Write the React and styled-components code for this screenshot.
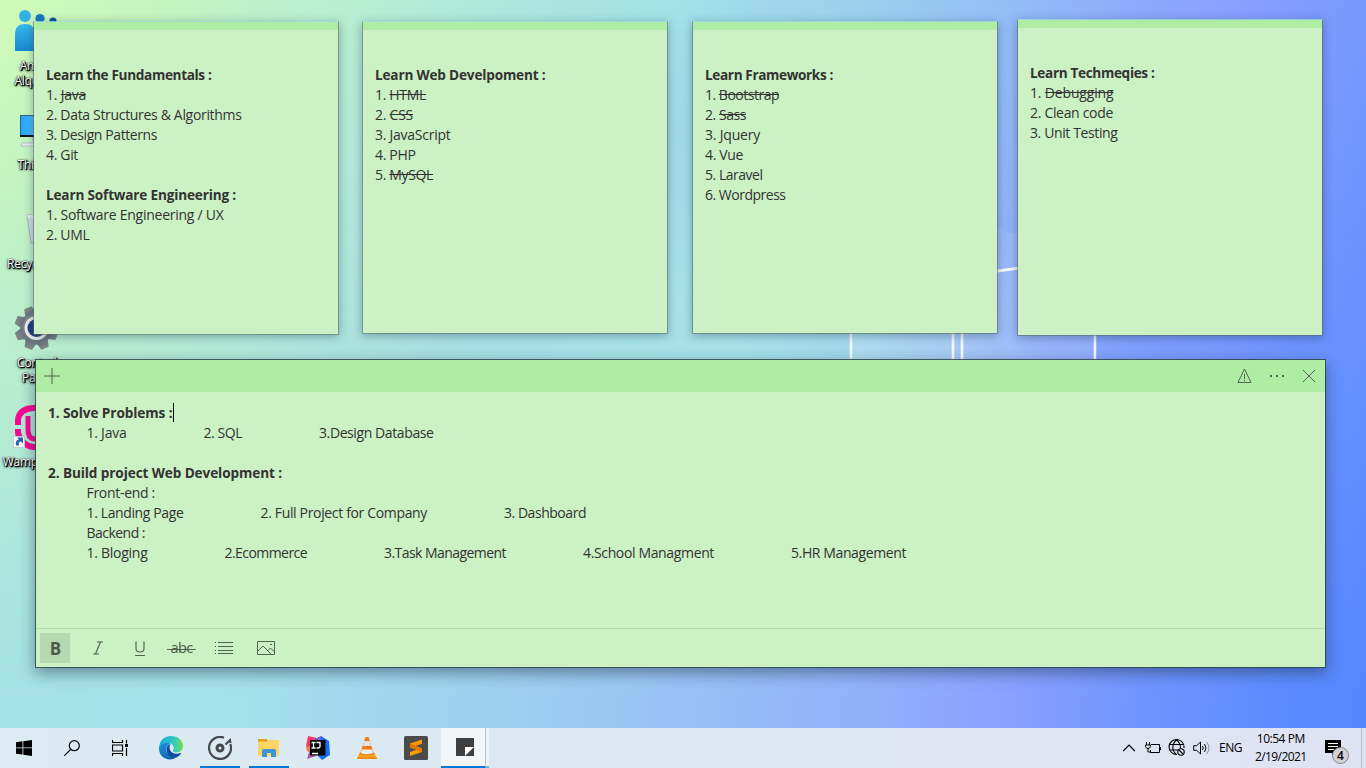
import React, { useLayoutEffect, useRef, useState } from "react";
import styled, { createGlobalStyle } from "styled-components";

const GlobalStyle = createGlobalStyle`
  * { box-sizing: border-box; }
  html, body { margin: 0; padding: 0; overflow: hidden; }
  body { font-family: "Open Sans", "Noto Sans", sans-serif; }
  svg { display: block; }
`;

const Desktop = styled.div`
  position: relative;
  display: flex;
  flex-direction: column;
  width: 1366px;
  height: 768px;
  overflow: hidden;
  background: linear-gradient(90deg, #d0fbb6 0, #c4f5c2 170px, #b4ecd6 400px, #a3e1e7 680px, #9bceee 880px, #92bbf7 1030px, #8da8fd 1150px, #889fff 1250px, #7799ff 1366px);
`;
const WallpaperLower = styled.div`
  position: absolute;
  inset: 0;
  background: linear-gradient(90deg, #a4e1e6 0, #a4e0ea 240px, #a0d5ee 400px, #9bc8f2 600px, #91b2fa 850px, #8ba1ff 1000px, #7195ff 1130px, #598aff 1300px, #5587ff 1366px);
  mask-image: linear-gradient(180deg, transparent 0, #000 700px);
`;
const WallpaperArt = styled.svg`
  position: absolute;
  inset: 0;
`;
const Workspace = styled.main`
  position: relative;
  flex: 1;
`;

const Shortcuts = styled.div`
  display: flex;
  flex-direction: column;
  width: 74px;
`;
const Shortcut = styled.div`
  display: flex;
  flex-direction: column;
  align-items: center;
  height: 99px;
  padding-top: 6px;
`;
const ShortcutLabel = styled.div`
  margin-top: 4px;
  font-size: 12px;
  line-height: 15px;
  letter-spacing: -0.25px;
  text-align: center;
  white-space: pre;
  color: #fff;
  text-shadow: 0 0 1px #000, 1px 1px 0 rgba(0, 0, 0, .85), 1px 1px 1px #000, 1px 1px 2px #000, 0 1px 3px #000;
`;

const Note = styled.section`
  position: absolute;
  display: flex;
  flex-direction: column;
  left: ${(p) => p.$x}px;
  top: ${(p) => p.$y}px;
  width: ${(p) => p.$w}px;
  height: ${(p) => p.$h}px;
  background: #cbf1c4;
  background-clip: padding-box;
  border: 1px solid ${(p) => (p.$active ? "rgba(45,70,75,.85)" : "rgba(100,105,110,.55)")};
  border-top-color: ${(p) => (p.$active ? "rgba(45,70,75,.85)" : "rgba(160,225,230,.75)")};
  box-shadow: ${(p) => (p.$active ? "0 5px 14px rgba(20,40,60,.48)" : "0 2px 9px rgba(20,50,70,.36)")};
  color: #333;
`;
const NoteStripe = styled.div`
  height: 8px;
  flex: none;
  background: #aeeda3;
`;
const NoteBody = styled.div`
  flex: 1;
  padding: ${(p) => (p.$active ? "11px 12px" : "35px 12px")};
`;
const NoteLine = styled.div`
  display: flex;
  gap: 76.5px;
  height: 20px;
  line-height: 20px;
  font-size: ${(p) => (p.$bold ? 13.6 : 14)}px;
  font-weight: ${(p) => (p.$bold ? 700 : 400)};
  padding-left: ${(p) => (p.$indent ? 38.5 : 0)}px;
  white-space: pre;
`;
const FitBox = styled.span`
  display: block;
  flex: none;
  width: ${(p) => p.$w}px;
`;
const Done = styled.span`
  text-decoration: line-through;
`;
const Caret = styled.i`
  width: 1px;
  height: 19px;
  margin-left: -76.5px;
  background: #000;
`;
const TitleBar = styled.header`
  display: flex;
  align-items: center;
  flex: none;
  height: 32px;
  background: #aeeda3;
  padding: 0 8px;
`;
const TitleActions = styled.div`
  display: flex;
  gap: 16px;
  margin-left: auto;
`;
const FormatBar = styled.footer`
  display: flex;
  gap: 12px;
  flex: none;
  height: 39px;
  padding: 4px;
  border-top: 1px solid #b8ddb4;
`;
const FormatButton = styled.div`
  display: flex;
  align-items: center;
  justify-content: center;
  width: 30px;
  height: 30px;
  padding-left: 1px;
  font-size: ${(p) => p.$size || 17}px;
  font-weight: ${(p) => (p.$on ? 700 : 400)};
  background: ${(p) => (p.$on ? "#b6d9b1" : "transparent")};
  color: #4b5b48;
`;
const StruckLetters = styled.span`
  flex: none;
  line-height: 18px;
  letter-spacing: -0.6px;
  white-space: pre;
  background: linear-gradient(#52634f, #52634f) center 10px / 100% 1px no-repeat;
`;

const Taskbar = styled.footer`
  position: relative;
  display: flex;
  height: 40px;
  background: linear-gradient(90deg, #dbebf1 0, #dce9f2 500px, #dfe5f3 900px, #dfe2f3 1366px);
`;
const TaskGroup = styled.div`
  display: flex;
  gap: ${(p) => p.$gap || 0}px;
  margin-right: ${(p) => p.$after || 0}px;
`;
const TaskButton = styled.div`
  display: flex;
  align-items: center;
  justify-content: center;
  width: 48px;
  height: 40px;
  background: linear-gradient(#0078d7, #0078d7) center bottom / ${(p) => (p.$running ? 40 : 0)}px 2px no-repeat;
`;
const ActiveTask = styled.div`
  display: flex;
  align-items: center;
  justify-content: center;
  width: 45px;
  margin-left: 1px;
  padding-left: 4px;
  background: #f2f6f9;
  border-right: 1px solid #b9c3ca;
  border-bottom: 2px solid #0078d7;
`;
const StackedEdge = styled.div`
  width: 3px;
  background: #edf3f7;
  border-bottom: 2px solid #79b5e6;
`;
const Tray = styled.div`
  display: flex;
  align-items: center;
  margin-left: auto;
  color: #000;
`;
const TrayIcon = styled.div`
  display: flex;
  justify-content: center;
  width: 24px;
`;
const Language = styled.div`
  width: 42px;
  padding-left: 6px;
  font-size: 12px;
  line-height: 16px;
  white-space: nowrap;
`;
const Clock = styled.div`
  display: flex;
  flex-direction: column;
  align-items: center;
  width: 52px;
  font-size: 12px;
  line-height: 18px;
  white-space: nowrap;
`;
const ActionCenter = styled.div`
  position: relative;
  width: 26px;
  height: 40px;
  margin-left: 16px;
  padding-top: 12px;
`;
const Badge = styled.div`
  position: absolute;
  left: 9px;
  top: 19px;
  display: flex;
  align-items: center;
  justify-content: center;
  width: 17px;
  height: 17px;
  border: 1px solid #858585;
  border-radius: 50%;
  background: #d3d3d3;
  font-size: 12px;
  line-height: 14px;
  font-weight: 600;
`;
const ShowDesktop = styled.div`
  width: 5px;
  height: 40px;
  margin-left: 12px;
  border-left: 1px solid #b5b9c6;
`;

/* Adjusts letter spacing until the run occupies the requested width. */
function Fit({ w, children }) {
  const ref = useRef(null);
  const [spacing, setSpacing] = useState(0);
  useLayoutEffect(() => {
    const el = ref.current;
    const natural = el.getBoundingClientRect().width;
    setSpacing((w - 0.5 - natural) / el.textContent.length);
  }, [w]);
  return (
    <FitBox $w={w}>
      <span ref={ref} style={{ letterSpacing: spacing }}>{children}</span>
    </FitBox>
  );
}

const notes = [
  { x: 33, y: 21, h: 314, lines: [
    { bold: true, t: "Learn the Fundamentals :", w: 166 },
    { n: "1. ", t: "Java", w: 40.5, done: true },
    { n: "2. ", t: "Data Structures & Algorithms", w: 196 },
    { n: "3. ", t: "Design Patterns", w: 111.5 },
    { n: "4. ", t: "Git", w: 32.5 },
    null,
    { bold: true, t: "Learn Software Engineering :", w: 190.5 },
    { n: "1. ", t: "Software Engineering / UX", w: 178 },
    { n: "2. ", t: "UML", w: 44 },
  ] },
  { x: 362, y: 21, h: 313, lines: [
    { bold: true, t: "Learn Web Develpoment :", w: 171 },
    { n: "1. ", t: "HTML", w: 51.5, done: true },
    { n: "2. ", t: "CSS", w: 38.5, done: true },
    { n: "3. ", t: "JavaScript", w: 76 },
    { n: "4. ", t: "PHP", w: 41 },
    { n: "5. ", t: "MySQL", w: 58.5, done: true },
  ] },
  { x: 692, y: 21, h: 313, lines: [
    { bold: true, t: "Learn Frameworks :", w: 128.5 },
    { n: "1. ", t: "Bootstrap", w: 74.5, done: true },
    { n: "2. ", t: "Sass", w: 41.5, done: true },
    { n: "3. ", t: "Jquery", w: 55.5 },
    { n: "4. ", t: "Vue", w: 38.5 },
    { n: "5. ", t: "Laravel", w: 58 },
    { n: "6. ", t: "Wordpress", w: 81 },
  ] },
  { x: 1017, y: 19, h: 317, lines: [
    { bold: true, t: "Learn Techmeqies :", w: 125 },
    { n: "1. ", t: "Debugging", w: 84, done: true },
    { n: "2. ", t: "Clean code", w: 83.5 },
    { n: "3. ", t: "Unit Testing", w: 88 },
  ] },
];

const plan = [
  { bold: true, caret: true, cells: [["1. Solve Problems :", 125]] },
  { indent: true, cells: [["1. Java", 40.5], ["2. SQL", 39], ["3.Design Database", 115]] },
  { cells: [] },
  { bold: true, cells: [["2. Build project Web Development :", 234.5]] },
  { indent: true, cells: [["Front-end :", 69]] },
  { indent: true, cells: [["1. Landing Page", 97.5], ["2. Full Project for Company", 167], ["3. Dashboard", 82.5]] },
  { indent: true, cells: [["Backend :", 59]] },
  { indent: true, cells: [["1. Bloging", 61.5], ["2.Ecommerce", 83], ["3.Task Management", 122.5], ["4.School Managment", 131.5], ["5.HR Management", 115.5]] },
];

const PeopleIcon = () => (
  <svg width="48" height="48" viewBox="0 0 48 48">
    <defs>
      <linearGradient id="person" x1="0" y1="0" x2="0" y2="1"><stop offset="0" stopColor="#35b9ea" /><stop offset="1" stopColor="#1688d2" /></linearGradient>
    </defs>
    <circle cx="27" cy="12.500" r="4.600" fill="#1878c4" /><circle cx="40" cy="15" r="3.600" fill="#0b559f" />
    <path d="M20 45V24a8 8 0 0 1 16 0v21z" fill="#1878c4" />
    <circle cx="12" cy="10" r="6" fill="#31b2e6" />
    <path d="M2 45V28c0-7 4-10 10-10s10 3 10 10v17z" fill="url(#person)" />
  </svg>
);
const ComputerIcon = () => (
  <svg width="48" height="48" viewBox="0 0 48 48">
    <defs><linearGradient id="screen"><stop offset="0" stopColor="#22a7fb" /><stop offset="1" stopColor="#91d3fc" /></linearGradient></defs>
    <rect x="7" y="10" width="36" height="22" fill="#345d8c" /><rect x="8" y="11" width="34" height="19" fill="url(#screen)" />
    <path d="M7 30h36v2H7z" fill="#10151b" /><path d="M19 32h10v4H19z" fill="#b8c2cd" /><path d="M9 38h32v3H8z" fill="#e7ecf5" stroke="#a5adbd" strokeWidth=".7" />
  </svg>
);
const BinIcon = () => (
  <svg width="48" height="48" viewBox="0 0 48 48">
    <path d="M14 11h26l-4 28H18z" fill="#cfdbe1" stroke="#a4b2b7" strokeWidth="1" />
    <path d="M14 11h26l-1 3H15z" fill="#e4eaec" /><path d="M21 25l5-4 4 4-4 9-5-3z" fill="#2587cc" />
  </svg>
);
const ControlIcon = () => (
  <svg width="48" height="48" viewBox="0 0 48 48">
    <defs><linearGradient id="cog" x1="0" y1="0" x2=".3" y2="1"><stop offset="0" stopColor="#8c8985" /><stop offset="1" stopColor="#667681" /></linearGradient></defs>
    <g transform="translate(23.5 25)" fill="url(#cog)">
      <circle r="16.500" />
      {[22, 67, 112, 157, 202, 247, 292, 337].map((a) => <path key={a} transform={`rotate(${a})`} d="M-6-14l2-8H4l2 8z" />)}
      <circle r="12" fill="#efefed" /><circle r="9" fill="#243d7b" />
    </g>
  </svg>
);
const WampIcon = () => (
  <svg width="48" height="48" viewBox="0 0 48 48">
    <g fill="none" stroke="#f80895" strokeWidth="6">
      <path d="M5 23V18Q6 7 20 6h11q10 1 11 12v7M5 27v4q3 12 15 14h11q11-2 11-13" />
      <path d="M15 14v13q0 10 7 10 5 0 5-7V16m0 13q0 8 7 7" strokeWidth="5" />
    </g>
    <path d="M.5 34.500h11v11H.5z" fill="#f5f7f9" stroke="#c6ccd1" /><path d="M3 43.500q-1-6 3-6l-2-2h6v6l-2-2q-3 0-2 4z" fill="#2963aa" />
  </svg>
);

const shortcuts = [
  [PeopleIcon, "Amjad\nAlqudah"], [ComputerIcon, "This PC"], [BinIcon, "Recycle Bin"],
  [ControlIcon, "Control\nPanel"], [WampIcon, "Wampserver"],
];

const Line = ({ d, size = 16, w = 1, children }) => (
  <svg width={size} height={size} viewBox={`0 0 ${size} ${size}`} fill="none" stroke="#52634f" strokeWidth={w}>
    {d && <path d={d} />}{children}
  </svg>
);

const EdgeIcon = () => (
  <svg width="24" height="24" viewBox="0 0 24 24">
    <defs>
      <linearGradient id="edgeTop"><stop offset="0" stopColor="#16a9df" /><stop offset=".6" stopColor="#32c7c7" /><stop offset="1" stopColor="#6ae052" /></linearGradient>
      <linearGradient id="edgeLow" x1="0" y1="0" x2="1" y2="1"><stop offset="0" stopColor="#1695de" /><stop offset="1" stopColor="#0d54a6" /></linearGradient>
    </defs>
    <path d="M0 13C0 5 5 0 12 0c7 0 12 4.700 12 10 0 4-3 6.400-6.500 6.400-3 0-4-1.200-3.400-2.200.8-1.200 1-2.500.2-4C12.800 5.500 4 5.500 0 13z" fill="url(#edgeTop)" />
    <path d="M0 12.500C2 6.500 9 6 12.500 8.500c-3-.8-5.500 1.500-5.400 4.700 0 6 5.900 10 11.400 7.800C10 26.500 0 22 0 12.500z" fill="url(#edgeLow)" />
    <path d="M7.400 13c0-2.500 1.700-4.400 4.100-4.700-3 5 1.500 12 10.700 8.400-.5 2.500-4.500 5-7.900 5.300-4-.5-6.900-4-6.900-9z" fill="#0d4f9e" />
  </svg>
);
const IdeaIcon = () => (
  <svg width="24" height="24" viewBox="0 0 24 24">
    <path d="M2 0l9 2-5 14-6-6z" fill="#fc3569" /><path d="M9 3l6-3 8 5 1 14-8 5-4-4z" fill="#166ff3" /><path d="M15 0l-6 4 5 7z" fill="#8160d5" />
    <path d="M0 11l9-2-3 9-5-3z" fill="#ff7a48" /><path d="M4 13l-3 10 9-3z" fill="#ad53b7" />
    <path d="M4 4h15.500v15.500H4z" fill="#080808" /><path d="M5.500 6.500h4M7.500 6.500v5.500M5.500 12h4M10.500 6.500h3.500v4q0 1.500-1.500 1.500h-2M6 17.500h6" stroke="#fff" strokeWidth="1.300" fill="none" />
  </svg>
);
const VlcIcon = () => (
  <svg width="20" height="24" viewBox="0 0 20 24">
    <path d="M3 16h14l3 7H0z" fill="#fba21d" /><path d="M0 21.500h20V23H0z" fill="#ee8a10" />
    <path d="M8.500 1h3L17 18q-7 3-14 0z" fill="#f07b17" /><path d="M7.300 5h5.400l1.500 5H5.800z" fill="#dfe3e5" /><path d="M4.800 13.500h10.400l1 3.500q-6 2.500-12.500 0z" fill="#eceeee" />
  </svg>
);

export default function App() {
  return (
    <>
      <GlobalStyle />
      <Desktop>
        <WallpaperLower />
        <WallpaperArt width="1366" height="768">
          <defs>
            <linearGradient id="glow" x1="0" y1="0" x2="0" y2="1"><stop offset="0" stopColor="#fff" stopOpacity=".08" /><stop offset="1" stopColor="#fff" stopOpacity=".12" /></linearGradient>
            <radialGradient id="bloom"><stop offset="0" stopColor="#adefe2" stopOpacity=".6" /><stop offset=".4" stopColor="#adefe2" stopOpacity=".5" /><stop offset="1" stopColor="#adefe2" stopOpacity="0" /></radialGradient>
          </defs>
          <ellipse cx="740" cy="360" rx="300" ry="230" fill="url(#bloom)" />
          <path d="M851 200Q950 210 1095 260V360H851z" fill="url(#glow)" />
          <path d="M990 272l30-4" stroke="#fafafa" strokeWidth="3" />
          <path d="M851 330v35M1095 330v35" stroke="#f7f9fc" strokeWidth="2.500" />
          <path d="M953 330v35M962 330v35" stroke="#f7f8f9" strokeWidth="2.700" />
        </WallpaperArt>
        <Workspace>
          <Shortcuts>
            {shortcuts.map(([Icon, label]) => (
              <Shortcut key={label}><Icon /><ShortcutLabel>{label}</ShortcutLabel></Shortcut>
            ))}
          </Shortcuts>
          {notes.map((note) => (
            <Note key={note.x} $x={note.x} $y={note.y} $w={306} $h={note.h}>
              <NoteStripe />
              <NoteBody>
                {note.lines.map((l, i) => (
                  <NoteLine key={i} $bold={l?.bold}>
                    {l && <Fit w={l.w}>{l.n}{l.done ? <Done>{l.t}</Done> : l.t}</Fit>}
                  </NoteLine>
                ))}
              </NoteBody>
            </Note>
          ))}
          <Note $active $x={35} $y={359} $w={1291} $h={309}>
            <TitleBar>
              <Line d="M8 0v16M0 8h16" />
              <TitleActions>
                <Line d="M7.500 1L1 14.500h13zM7.500 6v5M7.500 12v1.200" />
                <Line><g fill="#52634f" stroke="none"><rect x="1" y="7" width="2" height="2" /><rect x="7" y="7" width="2" height="2" /><rect x="13" y="7" width="2" height="2" /></g></Line>
                <Line d="M2 2l12 12M14 2L2 14" />
              </TitleActions>
            </TitleBar>
            <NoteBody $active>
              {plan.map((row, i) => (
                <NoteLine key={i} $bold={row.bold} $indent={row.indent}>
                  {row.cells.map(([t, w]) => <Fit key={t} w={w}>{t}</Fit>)}
                  {row.caret && <Caret />}
                </NoteLine>
              ))}
            </NoteBody>
            <FormatBar>
              <FormatButton $on>B</FormatButton>
              <FormatButton><Line d="M7 2h6M3 14h6M10.500 2l-5 12" w={1.2} /></FormatButton>
              <FormatButton><Line d="M4 1.500v7q0 3.500 4 3.500t4-3.500v-7M3 15.500h10" w={1.2} /></FormatButton>
              <FormatButton $size={14.5}><StruckLetters> abc </StruckLetters></FormatButton>
              <FormatButton>
                <Line size={20}><path d="M1 4.500h2M1 8.500h2M1 12.500h2M1 15.500h2" strokeDasharray="1 1" /><path d="M4 4.500h15M4 8.500h15M4 12.500h15M4 15.500h15" /></Line>
              </FormatButton>
              <FormatButton>
                <Line size={20}><path d="M1.500 3.500h17v13h-17zM2 13l5-5 8 8M12 12.500l2.500-2.500 4 4" /><path d="M14 6.500h2" /></Line>
              </FormatButton>
            </FormatBar>
          </Note>
        </Workspace>
        <Taskbar>
          <TaskGroup $after={3}>
            <TaskButton>
              <svg width="16" height="16" viewBox="0 0 16 16"><path d="M0 2.300L6.500 1.300v6.200H0zM7.300 1.200L16 0v7.500H7.300zM0 8.300h6.500v6.300L0 13.700zM7.300 8.300H16V16l-8.700-1.200z" /></svg>
            </TaskButton>
            <TaskButton>
              <svg width="16" height="16" viewBox="0 0 16 16" fill="none" stroke="#000" strokeWidth="1.200"><circle cx="10.300" cy="5.700" r="5" /><path d="M6.700 9.300L.3 15.700" /></svg>
            </TaskButton>
            <TaskButton>
              <svg width="16" height="16" viewBox="0 0 16 16" fill="none" stroke="#000"><path d="M.5 0v2.500h10V0M.5 5h10v6H.5zM.5 16v-2.500h10V16M14.500 0v3.500M14.500 8v8" strokeWidth="1.200" /><path d="M13 4h3v3h-3z" fill="#000" stroke="none" /></svg>
            </TaskButton>
          </TaskGroup>
          <TaskGroup $gap={1}>
            <TaskButton><EdgeIcon /></TaskButton>
            <TaskButton $running>
              <svg width="24" height="24" viewBox="0 0 24 24" fill="none" stroke="#45494c"><path d="M16 1.700A11 11 0 1 0 22.300 8" strokeWidth="2.200" /><path d="M17.500 8.500l4.500-4.500.5 3" strokeWidth="2" /><circle cx="12" cy="12" r="3" strokeWidth="3" /></svg>
            </TaskButton>
            <TaskButton $running>
              <svg width="22" height="20" viewBox="0 0 22 20"><path d="M0 1h9l1 3H0z" fill="#dfa01b" /><path d="M0 3.500h9L11 2h10v16H0z" fill="#ffd566" /><path d="M4 19v-6q0-2 2-2h10q2 0 2 2v6h-5v-4H9v4z" fill="#3e93d3" /></svg>
            </TaskButton>
            <TaskButton><IdeaIcon /></TaskButton>
            <TaskButton><VlcIcon /></TaskButton>
            <TaskButton>
              <svg width="24" height="24" viewBox="0 0 24 24"><rect width="24" height="24" rx="1.500" fill="#4b4b4b" /><path d="M6 7.500l12-4v4.200l-7 2.500 7 2V16L6 20v-4l7-2.500-7-2z" fill="#ff9800" /><path d="M6 7.500l12 4.700V16L6 11.500z" fill="#df7900" /></svg>
            </TaskButton>
          </TaskGroup>
          <ActiveTask>
            <svg width="18" height="18" viewBox="0 0 18 18"><path d="M0 0h18v9H9v9H0z" fill="#3e3e3e" /><path d="M9 9h9l-9 9z" fill="#fff" /><path d="M18 9v9H9z" fill="#3e3e3e" /></svg>
          </ActiveTask>
          <StackedEdge />
          <Tray>
            <TrayIcon><svg width="14" height="14" viewBox="0 0 14 14" fill="none" stroke="#000" strokeWidth="1.200"><path d="M1.200 10L7 4.200l5.800 5.800" /></svg></TrayIcon>
            <TrayIcon><svg width="17" height="14" viewBox="0 0 17 14" fill="none" stroke="#000"><path d="M6 3.500h8.500v8h-9V9M15.500 6v3M1.500 1v3M4.500 1v3M.5 4h5v1.500Q5 7.500 3 7.500T.5 5.500zM3 7.500V11h2.500" /></svg></TrayIcon>
            <TrayIcon>
              <svg width="18" height="18" viewBox="0 0 18 18" fill="none" stroke="#000" strokeWidth="1.100"><path d="M9 15.500A7.500 7.500 0 1 1 16 9M2 5.500h14M1.500 11H10M8.500 1Q4 5 5 10.500q.5 3 3.500 5M8.500 1q4 3 4 8" /><circle cx="13" cy="13" r="3.200" /><path d="M11 11l4 4" /></svg>
            </TrayIcon>
            <TrayIcon>
              <svg width="17" height="14" viewBox="0 0 17 14" fill="none" stroke="#000"><path d="M.7 4.700h3L7.500 1v12L3.700 9.300h-3z" /><path d="M9.500 5q1.500 2 0 4M11.500 3q3 4 0 8" /><path d="M13.700 1q4.500 6 0 12" stroke="#999" /></svg>
            </TrayIcon>
            <Language><Fit w={23.5}>ENG</Fit></Language>
            <Clock><Fit w={48.5}>10:54 PM</Fit><Fit w={52}>2/19/2021</Fit></Clock>
            <ActionCenter>
              <svg width="20" height="18" viewBox="0 0 20 18"><path d="M2 0h16v13H11l-2 3v-3H2z" /><path d="M5 3.500h10M5 6.500h10M5 9.500h6" stroke="#fff" strokeWidth="1.200" /></svg>
              <Badge>4</Badge>
            </ActionCenter>
            <ShowDesktop />
          </Tray>
        </Taskbar>
      </Desktop>
    </>
  );
}
